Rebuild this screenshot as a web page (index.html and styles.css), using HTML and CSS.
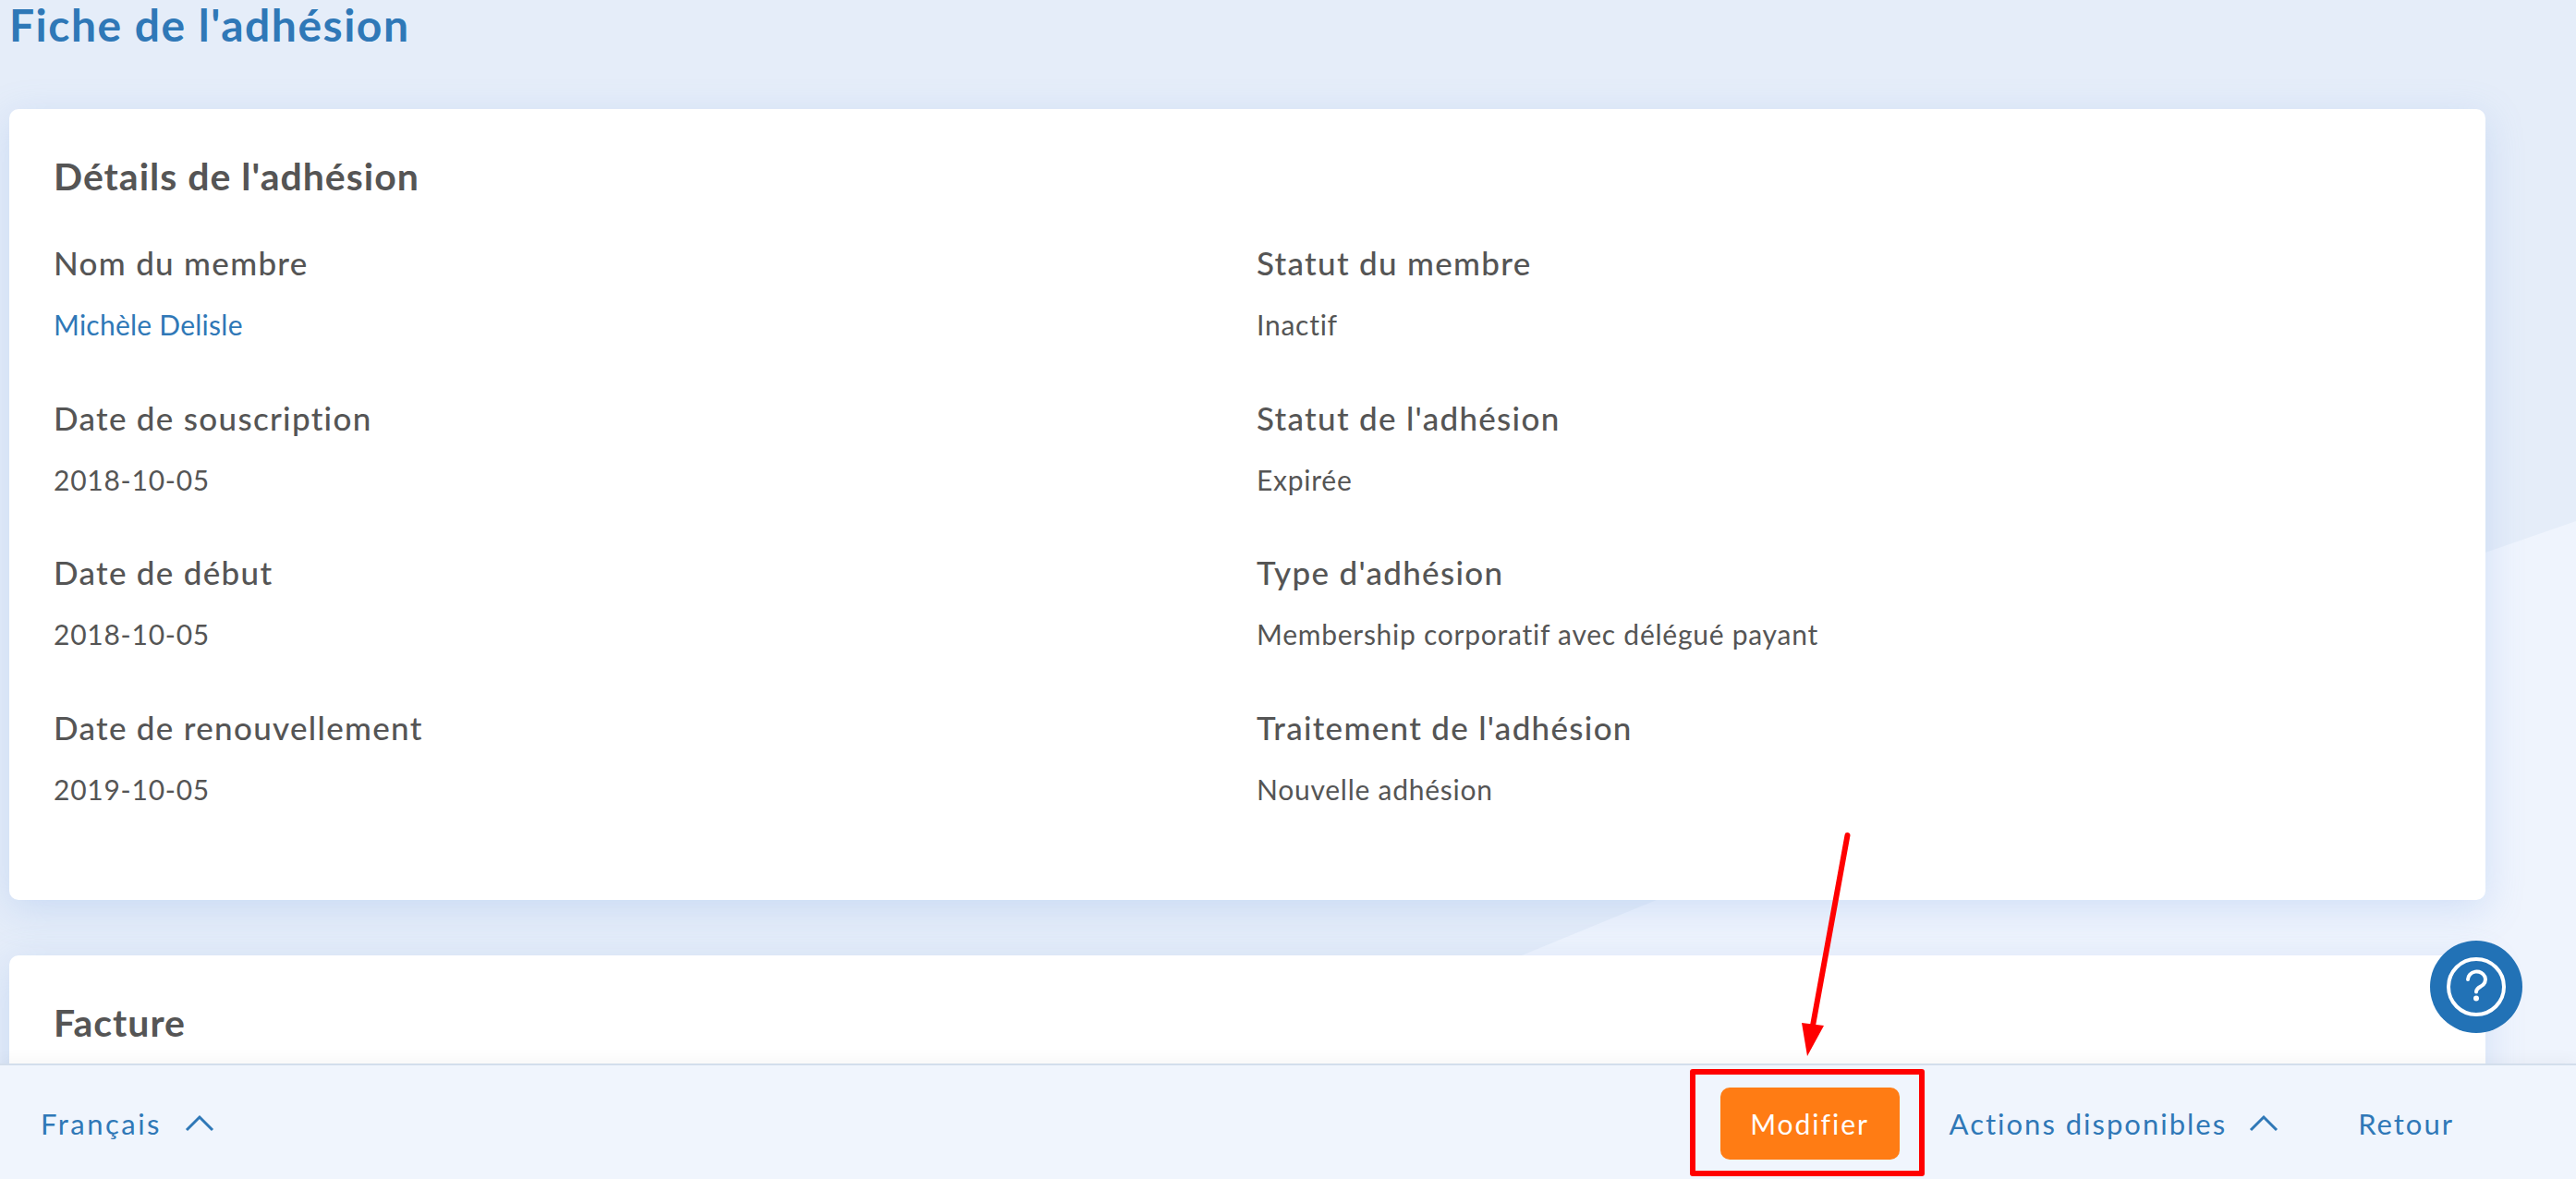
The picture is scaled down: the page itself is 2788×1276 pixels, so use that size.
FILE: index.html
```html
<!DOCTYPE html>
<html lang="fr">

<head>
    <meta charset="UTF-8">
    <title>Fiche de l'adhésion</title>
    <link rel="stylesheet" href="styles.css">
</head>

<body>
    <div class="bg-shape"></div>

    <main class="page">
        <h1 class="page-title">Fiche de l'adhésion</h1>

        <section class="card">
            <h2 class="card-title">Détails de l'adhésion</h2>
            <div class="fields">
                <div class="field">
                    <div class="field-label">Nom du membre</div>
                    <a class="field-value field-link">Michèle Delisle</a>
                </div>
                <div class="field">
                    <div class="field-label">Statut du membre</div>
                    <div class="field-value">Inactif</div>
                </div>
                <div class="field">
                    <div class="field-label">Date de souscription</div>
                    <div class="field-value">2018-10-05</div>
                </div>
                <div class="field">
                    <div class="field-label">Statut de l'adhésion</div>
                    <div class="field-value">Expirée</div>
                </div>
                <div class="field">
                    <div class="field-label">Date de début</div>
                    <div class="field-value">2018-10-05</div>
                </div>
                <div class="field">
                    <div class="field-label">Type d'adhésion</div>
                    <div class="field-value">Membership corporatif avec délégué payant</div>
                </div>
                <div class="field">
                    <div class="field-label">Date de renouvellement</div>
                    <div class="field-value">2019-10-05</div>
                </div>
                <div class="field">
                    <div class="field-label">Traitement de l'adhésion</div>
                    <div class="field-value">Nouvelle adhésion</div>
                </div>
            </div>
        </section>

        <section class="card card-next">
            <h2 class="card-title">Facture</h2>
        </section>
    </main>

    <button class="help-button" aria-label="Aide">
        <svg width="64" height="64" viewBox="0 0 64 64" fill="none" stroke="#fff" stroke-width="4" stroke-linecap="round">
            <circle cx="32" cy="32" r="30"></circle>
            <path d="M23 24a9.500 8.500 0 1 1 14 7.500c-3 1.800-5 3-5 6"></path>
            <circle cx="32" cy="44.500" r="1.500" fill="#fff" stroke-width="3"></circle>
        </svg>
    </button>

    <footer class="action-bar">
        <a class="bar-link lang-link">Français
            <svg class="chevron" width="32" height="20" viewBox="0 0 32 20" fill="none" stroke="#2f78b7" stroke-width="3">
                <path d="M2 17L16 3l14 14"></path>
            </svg>
        </a>
        <div class="bar-actions">
            <button class="btn-edit">Modifier</button>
            <a class="bar-link">Actions disponibles
                <svg class="chevron" width="32" height="20" viewBox="0 0 32 20" fill="none" stroke="#2f78b7" stroke-width="3">
                    <path d="M2 17L16 3l14 14"></path>
                </svg>
            </a>
            <a class="bar-link back-link">Retour</a>
        </div>
    </footer>

    <!-- annotation drawn over the screenshot -->
    <div class="mark-box"></div>
    <svg class="mark-arrow" width="80" height="250" viewBox="0 0 80 250">
        <path d="M59.500 6L22 212" stroke="#ff0000" stroke-width="6" stroke-linecap="round"></path>
        <path d="M10 209L34 212L16 245Z" fill="#ff0000"></path>
    </svg>
</body>

</html>
```

FILE: styles.css
```css
html,
body {
    margin: 0;
    height: 100%;
    overflow: hidden;
}

body {
    position: relative;
    background: #e5edf9;
    font-family: Lato, "Open Sans", sans-serif;
    color: #555;
}

.bg-shape {
    position: absolute;
    inset: 0;
    background: #eff4fd;
    clip-path: polygon(100% 564px, 2690px 598px, 1793px 974px, 1647px 1034px, 1500px 1100px, 1500px 100%, 100% 100%);
}

.page {
    position: relative;
    padding: 0 98px 0 10px;
}

.page-title {
    margin: 0;
    padding: 3px 0 0 0;
    height: 118px;
    box-sizing: border-box;
    font-size: 48px;
    line-height: 48px;
    font-weight: 700;
    letter-spacing: 1.500px;
    color: #2f78b7;
}

.card {
    background: #fff;
    border-radius: 10px;
    padding: 48px;
    height: 856px;
    box-sizing: border-box;
    box-shadow: 0 10px 40px rgba(120, 165, 230, 0.25);
}

.card-next {
    margin-top: 60px;
    height: 300px;
}

.card-title {
    margin: 0;
    font-size: 41px;
    line-height: 50px;
    font-weight: 700;
    letter-spacing: 1px;
    color: #555;
}

.fields {
    display: grid;
    grid-template-columns: 1302px 1fr;
    margin-top: 47px;
}

.field {
    height: 167.500px;
}

.field-label {
    font-size: 35px;
    line-height: 42px;
    font-weight: 500;
    letter-spacing: 1.300px;
    color: #555;
}

.field-value {
    display: block;
    margin-top: 27px;
    font-size: 30px;
    line-height: 38px;
    letter-spacing: 0.750px;
    color: #555;
}

.field-link {
    letter-spacing: 0.250px;
    color: #2f78b7;
}

.help-button {
    position: absolute;
    left: 2630px;
    top: 1018px;
    width: 100px;
    height: 100px;
    padding: 0;
    display: flex;
    align-items: center;
    justify-content: center;
    border: none;
    border-radius: 50%;
    background: #2272b6;
}

.action-bar {
    position: absolute;
    left: 0;
    right: 0;
    bottom: 0;
    height: 125px;
    box-sizing: border-box;
    padding: 2px 132px 0 44px;
    display: flex;
    align-items: center;
    justify-content: space-between;
    background: #f0f5fd;
    border-top: 2px solid #d3deec;
    box-shadow: 0 -6px 14px rgba(0, 0, 0, 0.03);
}

.bar-actions {
    display: flex;
    align-items: center;
}

.bar-link {
    display: flex;
    align-items: center;
    gap: 24px;
    font-size: 31px;
    letter-spacing: 2px;
    color: #2f78b7;
}

.lang-link {
    gap: 25px;
    letter-spacing: 2.500px;
}

.back-link {
    margin-left: 86px;
}

.btn-edit {
    width: 194px;
    height: 78px;
    margin-right: 54px;
    border: none;
    border-radius: 10px;
    background: #ff7c14;
    color: #fff;
    font-family: inherit;
    font-size: 30px;
    letter-spacing: 2px;
}

.mark-box {
    position: absolute;
    left: 1829px;
    top: 1157px;
    width: 254px;
    height: 116px;
    box-sizing: border-box;
    border: 6px solid #ff0000;
    border-radius: 3px;
}

.mark-arrow {
    position: absolute;
    left: 1940px;
    top: 898px;
}
```
